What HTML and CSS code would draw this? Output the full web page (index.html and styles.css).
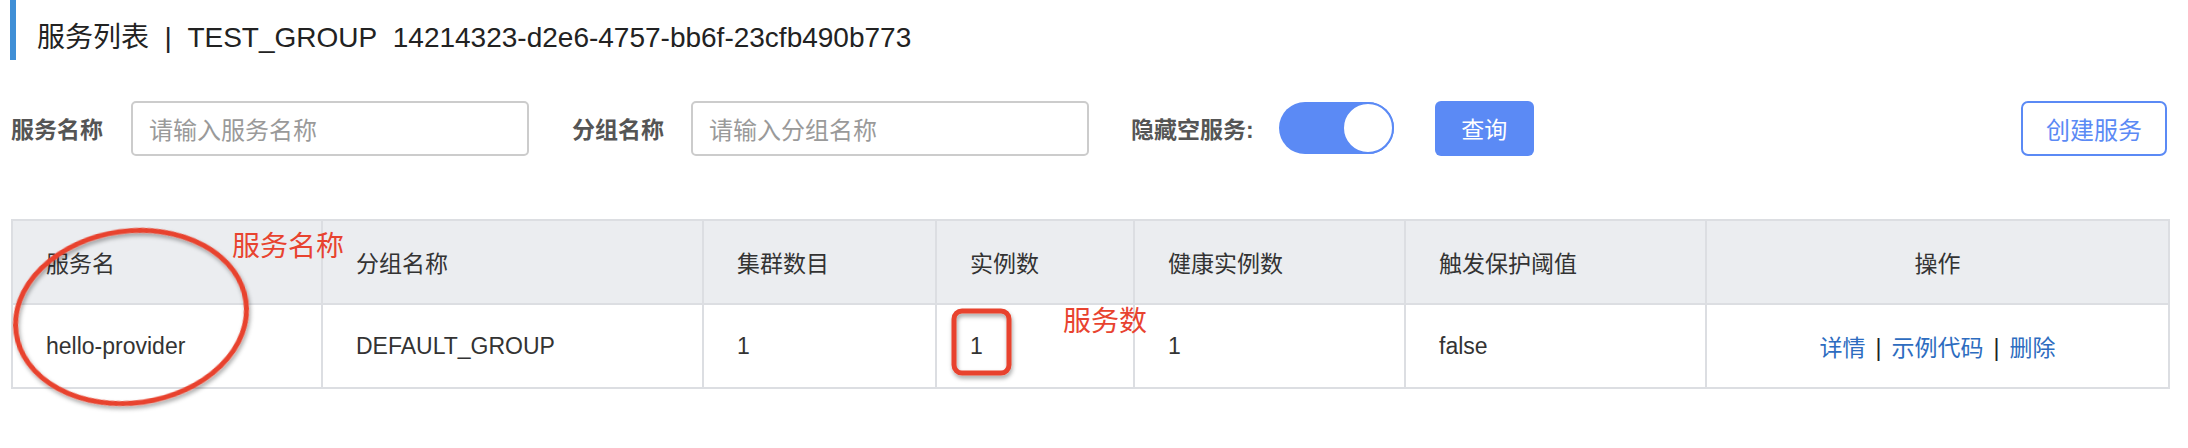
FILE: index.html
```html
<!DOCTYPE html>
<html lang="zh-CN">
<head>
<meta charset="utf-8">
<title>服务列表</title>
<link rel="stylesheet" href="styles.css">
</head>
<body>
<div class="page">
  <div class="title">服务列表&nbsp;&nbsp;|&nbsp;&nbsp;TEST_GROUP&nbsp;&nbsp;14214323-d2e6-4757-bb6f-23cfb490b773</div>

  <div class="filters">
    <label class="flabel">服务名称</label>
    <div class="input"><span class="ph">请输入服务名称</span></div>
    <label class="flabel second">分组名称</label>
    <div class="input"><span class="ph">请输入分组名称</span></div>
    <label class="flabel third">隐藏空服务:</label>
    <div class="toggle"><span class="knob"></span></div>
    <button class="btn-primary">查询</button>
    <button class="btn-outline">创建服务</button>
  </div>

  <div class="table-wrap">
    <table class="table">
      <colgroup>
        <col class="c1"><col class="c2"><col class="c3"><col class="c4"><col class="c5"><col class="c6"><col class="c7">
      </colgroup>
      <thead>
        <tr>
          <th>服务名</th>
          <th>分组名称</th>
          <th>集群数目</th>
          <th>实例数</th>
          <th>健康实例数</th>
          <th>触发保护阈值</th>
          <th class="center">操作</th>
        </tr>
      </thead>
      <tbody>
        <tr>
          <td>hello-provider</td>
          <td>DEFAULT_GROUP</td>
          <td>1</td>
          <td>1</td>
          <td>1</td>
          <td>false</td>
          <td class="center"><a class="link">详情</a><span class="sep">|</span><a class="link">示例代码</a><span class="sep">|</span><a class="link">删除</a></td>
        </tr>
      </tbody>
    </table>
    <svg class="marks" width="2160" height="200" viewBox="0 0 2160 200">
      <defs>
        <filter id="sh" x="-20%" y="-20%" width="140%" height="140%">
          <feDropShadow dx="1" dy="3" stdDeviation="2" flood-color="#000" flood-opacity="0.35"/>
        </filter>
      </defs>
      <ellipse cx="120" cy="98" rx="116" ry="86" transform="rotate(-8 120 98)" fill="none" stroke="#e8432f" stroke-width="5" filter="url(#sh)"/>
      <rect x="943" y="92" width="55" height="62" rx="8" fill="none" stroke="#e8432f" stroke-width="5" filter="url(#sh)"/>
    </svg>
    <span class="note note1">服务名称</span>
    <span class="note note2">服务数</span>
  </div>
</div>
</body>
</html>
```
FILE: styles.css
```css
* { box-sizing: border-box; }
html, body { margin: 0; padding: 0; background: #fff; }
body {
  font-family: "Liberation Sans", "Noto Sans CJK SC", sans-serif;
  color: #333;
  width: 2188px;
  height: 448px;
  overflow: hidden;
}
.page { display: flex; flex-direction: column; }

.title {
  margin-left: 10px;
  height: 60px;
  border-left: 6px solid #3f8fd6;
  padding-left: 21px;
  padding-top: 20px;
  font-size: 28px;
  line-height: 36px;
  color: #222;
  white-space: nowrap;
}

.filters {
  display: flex;
  align-items: center;
  margin-top: 40px;
  padding-left: 11px;
  padding-right: 21px;
  height: 56px;
}
.flabel {
  font-size: 23px;
  font-weight: bold;
  color: #555;
  margin-right: 28px;
  white-space: nowrap;
}
.flabel.second { margin-left: 43px; margin-right: 27px; }
.flabel.third { margin-left: 42px; margin-right: 25px; }
.input {
  width: 398px;
  height: 55px;
  border: 2px solid #ccc;
  border-radius: 5px;
  padding-left: 16px;
  display: flex;
  align-items: center;
}
.ph { font-size: 24px; color: #9a9a9a; }
.toggle {
  width: 115px;
  height: 52px;
  border-radius: 26px;
  background: #5b8af5;
  display: flex;
  justify-content: flex-end;
  align-items: center;
}
.knob {
  width: 52px;
  height: 52px;
  border-radius: 50%;
  background: #fff;
  border: 2px solid #5b8af5;
}
.btn-primary {
  margin-left: 41px;
  width: 99px;
  height: 55px;
  border: none;
  border-radius: 6px;
  background: #5b8af5;
  color: #fff;
  font-family: inherit;
  font-size: 23px;
  padding: 0;
}
.btn-outline {
  margin-left: auto;
  width: 146px;
  height: 55px;
  border: 2px solid #5b8af5;
  border-radius: 7px;
  background: #fff;
  color: #5b8af5;
  font-family: inherit;
  font-size: 24px;
  padding: 0;
}

.table-wrap {
  position: relative;
  margin-top: 63px;
  margin-left: 11px;
  width: 2157px;
}
.table {
  width: 2157px;
  border-collapse: collapse;
  table-layout: fixed;
  font-size: 23px;
}
.c1 { width: 310px; } .c2 { width: 381px; } .c3 { width: 233px; } .c4 { width: 198px; }
.c5 { width: 271px; } .c6 { width: 301px; } .c7 { width: 463px; }
.table th, .table td {
  border: 2px solid #dcdee2;
  height: 84px;
  padding: 0 0 0 33px;
  text-align: left;
  font-weight: normal;
  color: #333;
  white-space: nowrap;
}
.table th { background: #ebedf0; }
.table .center { text-align: center; padding-left: 0; }
.link { color: #2d6cc0; text-decoration: none; }
.sep { margin: 0 10px; color: #222; }

.marks { position: absolute; left: 0; top: 0; pointer-events: none; }
.note {
  position: absolute;
  color: #e8432f;
  font-size: 28px;
  line-height: 32px;
  font-family: "Noto Sans CJK SC", sans-serif;
}
.note1 { left: 221px; top: 9px; }
.note2 { left: 1052px; top: 84px; }
```
